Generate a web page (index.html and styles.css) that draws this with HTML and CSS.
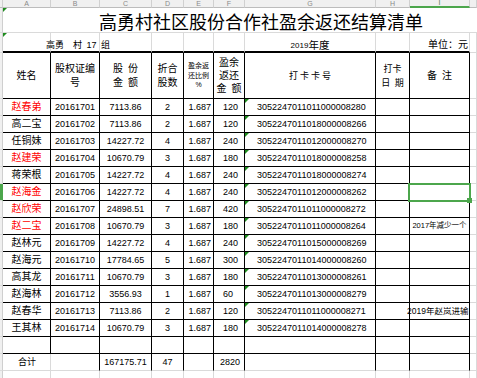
FILE: index.html
```html
<!DOCTYPE html>
<html lang="zh-CN">
<head>
<meta charset="utf-8">
<title>高勇村社区股份合作社盈余返还结算清单</title>
<link rel="stylesheet" href="styles.css">
</head>
<body>
<div class="sheet">
  <!-- column header bar -->
  <div class="c ch"></div>
  <div class="c ch"><span>A</span></div>
  <div class="c ch"><span>B</span></div>
  <div class="c ch"><span>C</span></div>
  <div class="c ch"><span>D</span></div>
  <div class="c ch"><span>E</span></div>
  <div class="c ch"><span>F</span></div>
  <div class="c ch"><span>G</span></div>
  <div class="c ch"><span>H</span></div>
  <div class="c ch on"><span>I</span></div>
  <div class="c ch"></div>

  <!-- row 1: title -->
  <div class="c rh"></div>
  <div class="c title t">高勇村社区股份合作社盈余返还结算清单</div>

  <!-- row 2 -->
  <div class="c rh"></div>
  <div class="c sub t grp">高勇&ensp;&ensp;村&ensp;17&ensp;组</div>
  <div class="c sub"></div>
  <div class="c sub"></div>
  <div class="c sub"></div>
  <div class="c sub"></div>
  <div class="c sub"></div>
  <div class="c sub yr"><span class="yd">2019</span>年度</div>
  <div class="c sub"></div>
  <div class="c sub unit">单位：元</div>
  <div class="c"></div>

  <!-- header row -->
  <div class="c rh"></div>
  <div class="c k hd">姓名</div>
  <div class="c k hd">股权证编<br>号</div>
  <div class="c k hd">股&ensp;份<br>金&ensp;额</div>
  <div class="c k hd">折合<br>股数</div>
  <div class="c k hd tiny">盈余返<br>还比例<br>%</div>
  <div class="c k hd f3">盈余<br>返还<br>金&ensp;额</div>
  <div class="c k hd card-h">打卡卡号</div>
  <div class="c k hd sm">打卡<br>日&ensp;期</div>
  <div class="c k hd">备&ensp;注</div>
  <div class="c"></div>

  <!-- 20161701 -->
  <div class="c rh"></div>
  <div class="c k red">赵春弟</div>
  <div class="c k n">20161701</div>
  <div class="c k n">7113.86</div>
  <div class="c k n">2</div>
  <div class="c k n ratio">1.687</div>
  <div class="c k n amt">120</div>
  <div class="c k n cardno t">3052247011011000008280</div>
  <div class="c k"></div>
  <div class="c k"></div>
  <div class="c"></div>

  <!-- 20161702 -->
  <div class="c rh"></div>
  <div class="c k">高二宝</div>
  <div class="c k n">20161702</div>
  <div class="c k n">7113.86</div>
  <div class="c k n">2</div>
  <div class="c k n ratio">1.687</div>
  <div class="c k n amt">120</div>
  <div class="c k n cardno t">3052247011018000008266</div>
  <div class="c k"></div>
  <div class="c k"></div>
  <div class="c"></div>

  <!-- 20161703 -->
  <div class="c rh"></div>
  <div class="c k">任铜妹</div>
  <div class="c k n">20161703</div>
  <div class="c k n">14227.72</div>
  <div class="c k n">4</div>
  <div class="c k n ratio">1.687</div>
  <div class="c k n amt">240</div>
  <div class="c k n cardno t">3052247011012000008270</div>
  <div class="c k"></div>
  <div class="c k"></div>
  <div class="c"></div>

  <!-- 20161704 -->
  <div class="c rh"></div>
  <div class="c k red">赵建荣</div>
  <div class="c k n">20161704</div>
  <div class="c k n">10670.79</div>
  <div class="c k n">3</div>
  <div class="c k n ratio">1.687</div>
  <div class="c k n amt">180</div>
  <div class="c k n cardno t">3052247011018000008258</div>
  <div class="c k"></div>
  <div class="c k"></div>
  <div class="c"></div>

  <!-- 20161705 -->
  <div class="c rh"></div>
  <div class="c k">蒋荣根</div>
  <div class="c k n">20161705</div>
  <div class="c k n">14227.72</div>
  <div class="c k n">4</div>
  <div class="c k n ratio">1.687</div>
  <div class="c k n amt">240</div>
  <div class="c k n cardno t">3052247011018000008274</div>
  <div class="c k"></div>
  <div class="c k"></div>
  <div class="c"></div>

  <!-- 20161706 -->
  <div class="c rh on"></div>
  <div class="c k red">赵海金</div>
  <div class="c k n">20161706</div>
  <div class="c k n">14227.72</div>
  <div class="c k n">4</div>
  <div class="c k n ratio">1.687</div>
  <div class="c k n amt">240</div>
  <div class="c k n cardno t">3052247011012000008262</div>
  <div class="c k"></div>
  <div class="c k sel"></div>
  <div class="c"></div>

  <!-- 20161707 -->
  <div class="c rh"></div>
  <div class="c k red">赵欣荣</div>
  <div class="c k n">20161707</div>
  <div class="c k n">24898.51</div>
  <div class="c k n">7</div>
  <div class="c k n ratio">1.687</div>
  <div class="c k n amt">420</div>
  <div class="c k n cardno t">3052247011011000008272</div>
  <div class="c k"></div>
  <div class="c k"></div>
  <div class="c"></div>

  <!-- 20161708 -->
  <div class="c rh"></div>
  <div class="c k red">赵二宝</div>
  <div class="c k n">20161708</div>
  <div class="c k n">10670.79</div>
  <div class="c k n">3</div>
  <div class="c k n ratio">1.687</div>
  <div class="c k n amt">180</div>
  <div class="c k n cardno t">3052247011011000008264</div>
  <div class="c k"></div>
  <div class="c k note-s">2017年减少一个</div>
  <div class="c"></div>

  <!-- 20161709 -->
  <div class="c rh"></div>
  <div class="c k">赵林元</div>
  <div class="c k n">20161709</div>
  <div class="c k n">14227.72</div>
  <div class="c k n">4</div>
  <div class="c k n ratio">1.687</div>
  <div class="c k n amt">240</div>
  <div class="c k n cardno t">3052247011015000008269</div>
  <div class="c k"></div>
  <div class="c k"></div>
  <div class="c"></div>

  <!-- 20161710 -->
  <div class="c rh"></div>
  <div class="c k">赵海元</div>
  <div class="c k n">20161710</div>
  <div class="c k n">17784.65</div>
  <div class="c k n">5</div>
  <div class="c k n ratio">1.687</div>
  <div class="c k n amt">300</div>
  <div class="c k n cardno t">3052247011014000008260</div>
  <div class="c k"></div>
  <div class="c k"></div>
  <div class="c"></div>

  <!-- 20161711 -->
  <div class="c rh"></div>
  <div class="c k">高其龙</div>
  <div class="c k n">20161711</div>
  <div class="c k n">10670.79</div>
  <div class="c k n">3</div>
  <div class="c k n ratio">1.687</div>
  <div class="c k n amt">180</div>
  <div class="c k n cardno t">3052247011013000008261</div>
  <div class="c k"></div>
  <div class="c k"></div>
  <div class="c"></div>

  <!-- 20161712 -->
  <div class="c rh"></div>
  <div class="c k">赵海林</div>
  <div class="c k n">20161712</div>
  <div class="c k n">3556.93</div>
  <div class="c k n">1</div>
  <div class="c k n ratio">1.687</div>
  <div class="c k n amt">60</div>
  <div class="c k n cardno t">3052247011013000008279</div>
  <div class="c k"></div>
  <div class="c k"></div>
  <div class="c"></div>

  <!-- 20161713 -->
  <div class="c rh"></div>
  <div class="c k">赵春华</div>
  <div class="c k n">20161713</div>
  <div class="c k n">7113.86</div>
  <div class="c k n">2</div>
  <div class="c k n ratio">1.687</div>
  <div class="c k n amt">120</div>
  <div class="c k n cardno t">3052247011011000008271</div>
  <div class="c k"></div>
  <div class="c k note-l">2019年赵岚进输</div>
  <div class="c"></div>

  <!-- 20161714 -->
  <div class="c rh"></div>
  <div class="c k">王其林</div>
  <div class="c k n">20161714</div>
  <div class="c k n">10670.79</div>
  <div class="c k n">3</div>
  <div class="c k n ratio">1.687</div>
  <div class="c k n amt">180</div>
  <div class="c k n cardno t">3052247011014000008278</div>
  <div class="c k"></div>
  <div class="c k"></div>
  <div class="c"></div>

  <!-- empty row -->
  <div class="c rh"></div>
  <div class="c k"></div>
  <div class="c k"></div>
  <div class="c k"></div>
  <div class="c k"></div>
  <div class="c k"></div>
  <div class="c k"></div>
  <div class="c k"></div>
  <div class="c k"></div>
  <div class="c k"></div>
  <div class="c"></div>

  <!-- total row -->
  <div class="c rh"></div>
  <div class="c tot sum-l">合计</div>
  <div class="c k tot"></div>
  <div class="c k tot n">167175.71</div>
  <div class="c k tot n">47</div>
  <div class="c k tot"></div>
  <div class="c k tot n amt-t">2820</div>
  <div class="c k tot"></div>
  <div class="c k tot"></div>
  <div class="c k tot"></div>
  <div class="c"></div>

  <!-- next row -->
  <div class="c rh"></div>
  <div class="c"></div>
  <div class="c"></div>
  <div class="c"></div>
  <div class="c"></div>
  <div class="c"></div>
  <div class="c"></div>
  <div class="c"></div>
  <div class="c"></div>
  <div class="c"></div>
  <div class="c"></div>
</div>
</body>
</html>
```

FILE: styles.css
```css
* {
  box-sizing: border-box;
  margin: 0;
  padding: 0;
}

html,
body {
  width: 477px;
  height: 378px;
  overflow: hidden;
  background: #fff;
}

body {
  font-family: "Liberation Sans", "Noto Sans CJK SC", sans-serif;
  font-size: 10px;
  color: #000;
}

.sheet {
  display: grid;
  grid-template-columns: 3px 48px 49px 52px 32px 30px 31px 131px 34px 60px 7px;
  grid-template-rows: 8px 25px 20px 46px repeat(15, 17px) 17px 8px;
  width: 477px;
}

.c {
  position: relative;
  display: flex;
  align-items: center;
  justify-content: center;
  white-space: nowrap;
  line-height: 1;
  border-right: 1px solid #dadada;
  border-bottom: 1px solid #dadada;
}

.k {
  border-right-color: #000;
  border-bottom-color: #000;
}

/* column header bar */
.ch {
  background: #f0f0f0;
  border-right-color: #d0d0d0;
  border-bottom-color: #bcbcbc;
  color: #8a8a8a;
  font-size: 7px;
  align-items: flex-end;
  overflow: hidden;
}

.ch span {
  line-height: 7px;
  margin-bottom: 0;
}

.ch.on {
  border-bottom: 2px solid #4ca64c;
  color: #4a7d4a;
}

/* row header strip */
.rh {
  background: #f0f0f0;
  border-right-color: #cfcfcf;
  border-bottom-color: #dcdcdc;
}

.rh.on {
  background: #4ca64c;
  border-right-color: #4ca64c;
}

/* title */
.title {
  grid-column: 2 / -1;
  border-right: 0;
  justify-content: flex-start;
  align-items: flex-start;
  padding: 6px 0 0 96px;
  font-size: 18px;
  line-height: 18px;
}

/* second row */
.sub {
  align-items: flex-end;
  font-size: 9px;
  padding-bottom: 1px;
}

.sheet > .sub {
  border-bottom: 2px solid #000;
}

.grp {
  justify-content: flex-start;
  padding-left: 43px;
}

.yr {
  font-size: 10.5px;
}

.yd {
  font-size: 8px;
}

.unit {
  justify-content: flex-end;
  padding-right: 1px;
  font-size: 10px;
}

/* header row */
.hd {
  text-align: center;
  line-height: 14px;
  font-size: 10px;
}

.hd.tiny {
  font-size: 7px;
  line-height: 9.5px;
}

.hd.f3 {
  line-height: 13px;
}

.hd.sm {
  font-size: 9px;
}

.card-h {
  font-size: 9px;
  letter-spacing: 2px;
  padding-left: 2px;
}

/* data */
.red {
  color: #ff0000;
}

.n {
  font-size: 9px;
}

.ratio {
  justify-content: flex-end;
  padding-right: 2px;
}

.amt {
  justify-content: flex-start;
  padding-left: 9px;
}

.amt-t {
  justify-content: flex-start;
  padding-left: 6px;
}

.cardno {
  justify-content: flex-start;
  padding-left: 12px;
}

/* green "number stored as text" markers */
.t::before {
  content: "";
  position: absolute;
  top: 0;
  left: 0;
  width: 0;
  height: 0;
  border-top: 4px solid #1e8c1e;
  border-right: 4px solid transparent;
}

/* remarks */
.note-s {
  font-size: 7.5px;
}

.note-l {
  font-size: 8.5px;
  justify-content: flex-start;
  text-indent: -3px;
}

/* total row */
.tot {
  border-bottom-color: #dadada;
}

.sum-l {
  font-size: 9px;
  padding-left: 1px;
}

/* selected cell */
.sel::after {
  content: "";
  position: absolute;
  left: -2px;
  top: -1px;
  right: -2px;
  bottom: -2px;
  border: 2px solid #4ca64c;
  z-index: 2;
}

.sel::before {
  content: "";
  position: absolute;
  right: -3px;
  bottom: -3px;
  width: 5px;
  height: 5px;
  background: #4ca64c;
  z-index: 3;
}
```
